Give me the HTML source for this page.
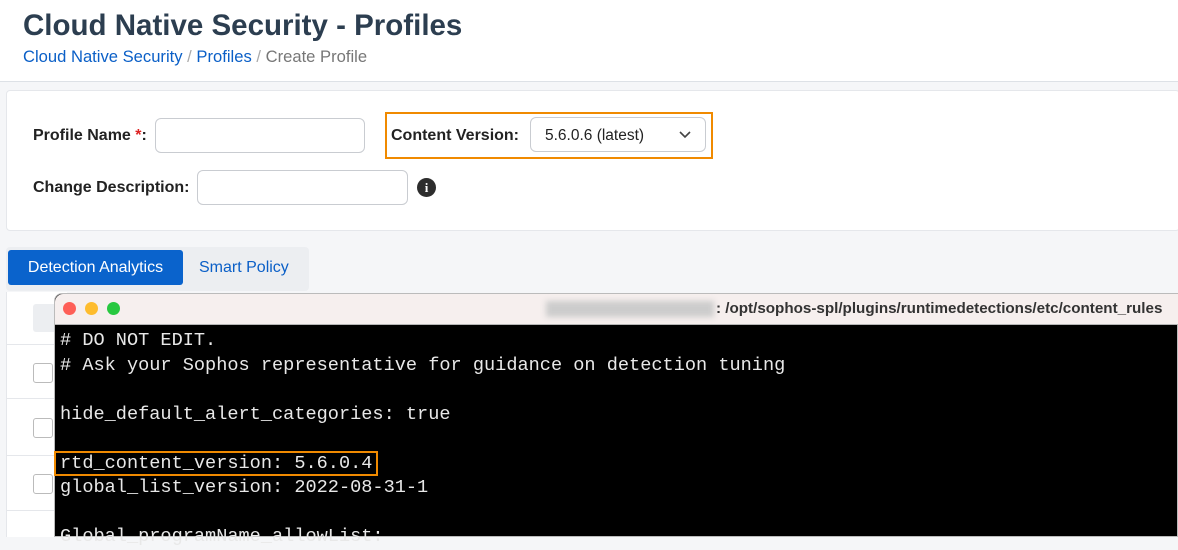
<!DOCTYPE html>
<html><head><meta charset="utf-8"><style>
body{margin:0;width:1178px;height:537px;overflow:hidden;background:#f5f6f8;font-family:"Liberation Sans",sans-serif;position:relative}
.a{position:absolute}
</style></head><body>
<div class="a" style="left:0;top:0;width:1178px;height:81px;background:#fff;border-bottom:1px solid #dde1e6"></div>
<div class="a" style="left:23px;top:9px;font-size:29.5px;font-weight:bold;color:#2c3e50">Cloud Native Security - Profiles</div>
<div class="a" style="left:23px;top:47px;font-size:16.6px;color:#0a5fc7">Cloud Native Security <span style="color:#aaa">/</span> Profiles <span style="color:#aaa">/</span> <span style="color:#777">Create Profile</span></div>
<div class="a" style="left:6px;top:90px;width:1172px;height:139px;background:#fff;border:1px solid #e5e7eb;border-radius:4px"></div>
<div class="a" style="left:33px;top:127px;font-size:16px;font-weight:bold;color:#222">Profile Name <span style="color:#d22">*</span>:</div>
<div class="a" style="left:155px;top:118px;width:208px;height:33px;border:1px solid #c9ccd1;border-radius:6px"></div>
<div class="a" style="left:385px;top:112px;width:324px;height:43px;border:2px solid #f08a00"></div>
<div class="a" style="left:391px;top:127px;font-size:16px;font-weight:bold;color:#222">Content Version:</div>
<div class="a" style="left:530px;top:117px;width:176px;height:35px;border:1px solid #c9ccd1;border-radius:6px;font-size:15.5px;color:#222;box-sizing:border-box;padding:9px 0 0 14px">5.6.0.6 (latest)<svg style="position:absolute;left:148px;top:13px" width="12" height="8"><path d="M1 1l5 5 5-5" fill="none" stroke="#444" stroke-width="1.6"/></svg></div>
<div class="a" style="left:33px;top:179px;font-size:16px;font-weight:bold;color:#222">Change Description:</div>
<div class="a" style="left:197px;top:170px;width:209px;height:33px;border:1px solid #c9ccd1;border-radius:6px"></div>
<div class="a" style="left:417px;top:178px;width:19px;height:19px;border-radius:50%;background:#2d2d2d;color:#fff;font-size:13px;font-weight:bold;text-align:center;line-height:19px;font-family:'Liberation Serif',serif">i</div>
<div class="a" style="left:6px;top:247px;width:303px;height:44px;background:#eceef1;border-radius:4px"></div>
<div class="a" style="left:8px;top:250px;width:175px;height:35px;background:#0a63cc;border-radius:3px;color:#fff;font-size:16px;text-align:center;line-height:35px">Detection Analytics</div>
<div class="a" style="left:199px;top:259px;font-size:16px;color:#0a5fc7">Smart Policy</div>
<div class="a" style="left:6px;top:292px;width:60px;height:245px;background:#fff;border-left:1px solid #e5e7eb"></div>
<div class="a" style="left:33px;top:304px;width:30px;height:28px;background:#eceef1;border-radius:3px"></div>
<div class="a" style="left:6px;top:344px;width:60px;border-top:1px solid #e5e7eb"></div>
<div class="a" style="left:6px;top:398px;width:60px;border-top:1px solid #e5e7eb"></div>
<div class="a" style="left:6px;top:455px;width:60px;border-top:1px solid #e5e7eb"></div>
<div class="a" style="left:6px;top:510px;width:60px;border-top:1px solid #e5e7eb"></div>
<div class="a" style="left:33px;top:363px;width:18px;height:18px;border:1px solid #bbb;border-radius:3px"></div>
<div class="a" style="left:33px;top:418px;width:18px;height:18px;border:1px solid #bbb;border-radius:3px"></div>
<div class="a" style="left:33px;top:474px;width:18px;height:18px;border:1px solid #bbb;border-radius:3px"></div>
<div class="a" style="left:54px;top:293px;width:1124px;height:244px;background:#000;border-radius:8px 0 0 0;border:1px solid #bbb;box-sizing:border-box"></div>
<div class="a" style="left:55px;top:294px;width:1123px;height:30px;background:#f6efee;border-radius:8px 0 0 0;border-bottom:1px solid #b5b5b5"></div>
<div class="a" style="left:63px;top:302px;width:13px;height:13px;border-radius:50%;background:#fe5f57"></div>
<div class="a" style="left:85px;top:302px;width:13px;height:13px;border-radius:50%;background:#febc2e"></div>
<div class="a" style="left:107px;top:302px;width:13px;height:13px;border-radius:50%;background:#28c840"></div>
<div class="a" style="left:546px;top:301px;width:168px;height:16px;background:#ccc;filter:blur(3px)"></div>
<div class="a" style="left:716px;top:300px;font-size:15.2px;font-weight:bold;color:#333">: /opt/sophos-spl/plugins/runtimedetections/etc/content_rules</div>
<pre class="a" style="left:60px;top:329px;margin:0;font-family:'Liberation Mono',monospace;font-size:18.6px;line-height:24.5px;color:#e8e8e8"># DO NOT EDIT.
# Ask your Sophos representative for guidance on detection tuning

hide_default_alert_categories: true

rtd_content_version: 5.6.0.4
global_list_version: 2022-08-31-1

Global_programName_allowList:</pre>
<div class="a" style="left:54px;top:451px;width:324px;height:25px;border:2px solid #f08a00;box-sizing:border-box"></div>
</body></html>
